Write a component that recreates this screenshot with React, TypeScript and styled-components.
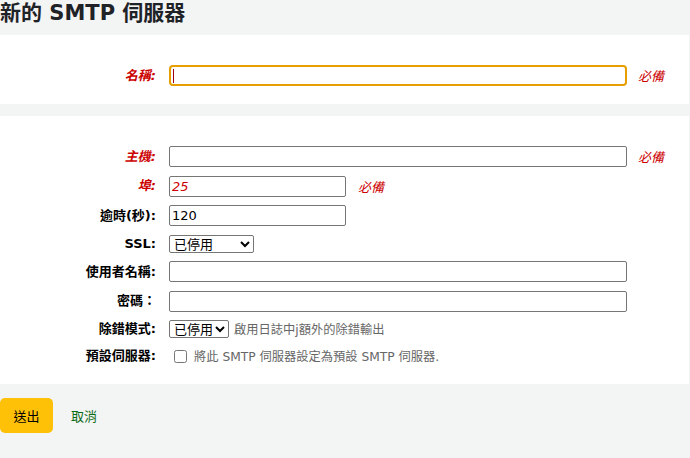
import React from "react";
import styled, { createGlobalStyle } from "styled-components";

const Global = createGlobalStyle`
  html, body { margin: 0; padding: 0; background: #f3f4f4; }
  body {
    font-family: "DejaVu Sans", "Noto Sans CJK TC", sans-serif;
    font-size: 13px;
    color: #000;
    width: 690px;
    height: 458px;
    overflow: hidden;
  }
  * { box-sizing: border-box; }
`;

const Page = styled.div`
  width: 690px;
  display: flex;
  flex-direction: column;
`;

const Title = styled.h1`
  margin: 1px 0 10px;
  font-size: 21px;
  line-height: 24px;
  font-weight: bold;
  color: #1f2226;
  white-space: nowrap;
`;

const Panel = styled.fieldset<{ $mb?: number }>`
  margin: 0 1px ${(p) => p.$mb ?? 0}px 0;
  border: 0;
  background: #fff;
  padding: 30px 0 18px;
  display: flex;
  flex-direction: column;
  gap: 8.5px;
`;

const Row = styled.div`
  display: flex;
  align-items: center;
`;

const Label = styled.label<{ $required?: boolean }>`
  width: 156px;
  flex: 0 0 156px;
  margin-right: 13px;
  text-align: right;
  font-weight: bold;
  font-size: 13px;
  line-height: 16px;
  white-space: nowrap;
  color: ${(p) => (p.$required ? "#cc0000" : "#000")};
  font-style: ${(p) => (p.$required ? "italic" : "normal")};
`;

const TextInput = styled.input<{ $w: number; $red?: boolean }>`
  width: ${(p) => p.$w}px;
  height: 21px;
  border: 1px solid #767676;
  border-radius: 2px;
  padding: 0 2px;
  margin: 0;
  font-family: "DejaVu Sans", "Noto Sans CJK TC", sans-serif;
  font-size: 13px;
  color: ${(p) => (p.$red ? "#cc0000" : "#000")};
  font-style: ${(p) => (p.$red ? "italic" : "normal")};
  background: #fff;
  outline: none;
`;

const FocusWrap = styled.div`
  position: relative;
  display: flex;
`;

const FocusInput = styled(TextInput)`
  border: 2px solid #e69e00;
  border-radius: 4px;
`;

const Caret = styled.span`
  position: absolute;
  left: 3.5px;
  top: 4px;
  width: 1px;
  height: 14px;
  background: #a00010;
  pointer-events: none;
`;

const Required = styled.span<{ $ml: number }>`
  margin-left: ${(p) => p.$ml}px;
  color: #cc0000;
  font-style: italic;
  font-size: 13px;
  white-space: nowrap;
`;

const Select = styled.select<{ $w: number }>`
  width: ${(p) => p.$w}px;
  height: 18px;
  margin: 0;
  font-family: "DejaVu Sans", "Noto Sans CJK TC", sans-serif;
  font-size: 13px;
  color: #000;
  border: 1px solid #767676;
  border-radius: 2px;
  background: #fff;
  padding: 0;
`;

const Hint = styled.span`
  margin-left: 5px;
  color: #666;
  font-size: 12.25px;
  white-space: nowrap;
`;

const Check = styled.input`
  width: 13px;
  height: 13px;
  margin: 3px 7px 3px 5px;
`;

const Actions = styled.div`
  display: flex;
  align-items: center;
  margin-top: 14px;
`;

const Submit = styled.button`
  height: 35px;
  padding: 0 13.5px;
  border: 0;
  border-radius: 5px;
  background: #ffc107;
  color: #000;
  font-family: "DejaVu Sans", "Noto Sans CJK TC", sans-serif;
  font-size: 13px;
`;

const Cancel = styled.a`
  margin-left: 18px;
  color: #0b6b14;
  font-size: 13px;
  text-decoration: none;
`;

export default function App() {
  return (
    <Page>
      <Global />
      <Title>新的 SMTP 伺服器</Title>
      <Panel $mb={12}>
        <Row>
          <Label $required>名稱:</Label>
          <FocusWrap>
            <FocusInput $w={458} />
            <Caret />
          </FocusWrap>
          <Required $ml={11}>必備</Required>
        </Row>
      </Panel>
      <Panel>
        <Row>
          <Label $required>主機:</Label>
          <TextInput $w={458} />
          <Required $ml={11}>必備</Required>
        </Row>
        <Row>
          <Label $required>埠:</Label>
          <TextInput $w={177} $red defaultValue="25" />
          <Required $ml={12}>必備</Required>
        </Row>
        <Row>
          <Label>逾時(秒):</Label>
          <TextInput $w={177} defaultValue="120" />
        </Row>
        <Row>
          <Label>SSL:</Label>
          <Select $w={85} defaultValue="disabled">
            <option value="disabled">已停用</option>
          </Select>
        </Row>
        <Row>
          <Label>使用者名稱:</Label>
          <TextInput $w={458} />
        </Row>
        <Row>
          <Label>密碼：</Label>
          <TextInput $w={458} type="password" />
        </Row>
        <Row>
          <Label>除錯模式:</Label>
          <Select $w={60} defaultValue="disabled">
            <option value="disabled">已停用</option>
          </Select>
          <Hint>啟用日誌中j額外的除錯輸出</Hint>
        </Row>
        <Row>
          <Label>預設伺服器:</Label>
          <Check type="checkbox" />
          <Hint as="span" style={{ marginLeft: 0 }}>
            將此 SMTP 伺服器設定為預設 SMTP 伺服器.
          </Hint>
        </Row>
      </Panel>
      <Actions>
        <Submit type="button">送出</Submit>
        <Cancel href="#">取消</Cancel>
      </Actions>
    </Page>
  );
}
